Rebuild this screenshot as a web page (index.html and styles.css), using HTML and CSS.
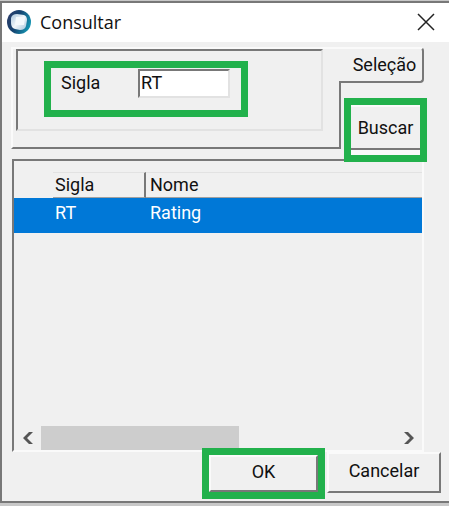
FILE: index.html
```html
<!DOCTYPE html>
<html lang="pt-BR">
<head>
<meta charset="UTF-8">
<meta name="viewport" content="width=device-width, initial-scale=1.0">
<title>Consultar</title>
<link rel="stylesheet" href="styles.css">
</head>
<body>
  <div class="window">
    <header class="title-bar">
      <svg class="logo" width="24" height="24" viewBox="0 0 24 24" aria-hidden="true">
        <defs>
          <linearGradient id="ring" x1="0" y1="0.3" x2="1" y2="0.7">
            <stop offset="0" stop-color="#2b3f6b"/>
            <stop offset="0.4" stop-color="#14426f"/>
            <stop offset="1" stop-color="#169cb8"/>
          </linearGradient>
          <linearGradient id="glow" x1="0" y1="0" x2="1" y2="1">
            <stop offset="0" stop-color="#a9c6dc"/>
            <stop offset="0.5" stop-color="#f1f6fa"/>
            <stop offset="1" stop-color="#a3c3da"/>
          </linearGradient>
        </defs>
        <circle cx="12" cy="12" r="12" fill="url(#ring)"/>
        <path d="M4 8 Q5 4 10 4 L17 5 Q20 6 20 10 L19 16 Q18 20 13 20 L8 19 Q4 18 4 13 Z" fill="url(#glow)"/>
        <path d="M9 7 L18 7 L17 15 L8 15 Z" fill="#f4f9fc"/>
      </svg>
      <h1>Consultar</h1>
      <button class="close-button" aria-label="Fechar">
        <svg width="18" height="18" viewBox="0 0 18 18">
          <path d="M1 1 L17 17 M17 1 L1 17" stroke="#222" stroke-width="1.5" fill="none"/>
        </svg>
      </button>
    </header>

    <main class="content">
      <section class="search">
        <div class="search-panel">
          <div class="search-group">
            <div class="highlight field">
              <label for="sigla">Sigla</label>
              <input type="text" id="sigla" value="RT">
            </div>
          </div>
        </div>
        <div class="search-side">
          <button class="tab">Seleção</button>
          <div class="highlight search-action">
            <button class="button">Buscar</button>
          </div>
        </div>
      </section>

      <section class="results">
        <table>
          <thead>
            <tr>
              <td class="marker"></td>
              <th class="code">Sigla</th>
              <th>Nome</th>
            </tr>
          </thead>
          <tbody>
            <tr class="selected">
              <td></td>
              <td>RT</td>
              <td>Rating</td>
            </tr>
          </tbody>
        </table>
        <div class="scrollbar">
          <button class="arrow" aria-label="Rolar para a esquerda">
            <svg width="12" height="12" viewBox="0 0 12 12"><path d="M7 0 H11 L5 6 L11 12 H7 L1 6 Z" fill="#555"/></svg>
          </button>
          <div class="track"><div class="thumb"></div></div>
          <button class="arrow" aria-label="Rolar para a direita">
            <svg width="12" height="12" viewBox="0 0 12 12"><path d="M5 0 H1 L7 6 L1 12 H5 L11 6 Z" fill="#555"/></svg>
          </button>
        </div>
      </section>

      <footer class="actions">
        <div class="highlight confirm">
          <button class="button">OK</button>
        </div>
        <button class="button cancel">Cancelar</button>
      </footer>
    </main>
  </div>
</body>
</html>
```
FILE: styles.css
```css
* {
  box-sizing: border-box;
  margin: 0;
  padding: 0;
}

body {
  display: flex;
  min-height: 100vh;
  padding: 1px 0 3px;
  background-color: #c8c8c8;
  color: #111;
  font-family: Roboto, "Liberation Sans", sans-serif;
  font-size: 18px;
  line-height: 22px;
}

button,
input {
  font: inherit;
  color: inherit;
}

.window {
  flex: 1;
  display: flex;
  flex-direction: column;
  border: 2px solid #787878;
  border-right: none;
  background-color: #f0f0f0;
}

.title-bar {
  display: flex;
  align-items: center;
  height: 39px;
  padding: 0 14px 2px 5px;
  background-color: #fff;
}

.logo {
  margin-right: 9px;
}

h1 {
  flex: 1;
  font-family: "Open Sans", "Noto Sans", sans-serif;
  font-size: 18px;
  font-weight: normal;
}

.close-button {
  display: flex;
  border: none;
  background: none;
}

.content {
  flex: 1;
  display: flex;
  flex-direction: column;
  padding: 5px 8px 8px 9px;
}

.highlight {
  display: flex;
  position: relative;
  z-index: 1;
  border: 7px solid #22b14c;
  background-color: #f0f0f0;
}

.button {
  flex: 1;
  padding-bottom: 3px;
  border: 2px solid #787878;
  border-top-color: #fafafa;
  border-left-color: #fafafa;
  background-color: #f0f0f0;
}

/* Search area */
.search {
  display: flex;
  margin-right: 17px;
}

.search-panel {
  flex: 1;
  padding: 0 16px 16px 3px;
  border: 2px solid #787878;
  border-top-color: #fafafa;
  border-left-color: #fafafa;
}

.search-group {
  height: 82px;
  padding: 10px 26px;
  border: 2px solid #787878;
  border-right-color: #e2e2e2;
  border-bottom-color: #e2e2e2;
}

.field {
  width: 204px;
  height: 56px;
  padding: 1px 11px 0 10px;
}

.field label {
  width: 77px;
  padding-top: 3px;
}

.field input {
  flex: 1;
  min-width: 0;
  height: 29px;
  padding: 0 1px 2px;
  border: 2px solid #787878;
  border-right-color: #e2e2e2;
  border-bottom-color: #e2e2e2;
  background-color: #fff;
}

.search-side {
  display: flex;
  flex-direction: column;
  width: 85px;
  margin-left: -2px;
}

.tab {
  position: relative;
  height: 36px;
  padding-left: 8px;
  border: 2px solid #787878;
  border-top-color: #fafafa;
  border-left: none;
  border-radius: 0 4px 4px 0;
  background-color: #f0f0f0;
}

.search-action {
  height: 64px;
  margin: 15px -3px -13px 5px;
  padding-bottom: 5px;
  background-color: #fafafa;
}

.search-action .button {
  padding-bottom: 0;
  border-left: none;
  border-right: none;
}

/* Results grid */
.results {
  flex: 1;
  display: flex;
  flex-direction: column;
  margin: 10px 17px 0 1px;
  padding-top: 11px;
  border: 2px solid #787878;
  border-right-color: #fafafa;
  border-bottom-color: #fafafa;
}

table {
  width: 100%;
  table-layout: fixed;
  border-collapse: separate;
  border-spacing: 0;
}

.marker {
  width: 39px;
}

th {
  height: 26px;
  padding: 0 4px;
  border-top: 1px solid #e2e2e2;
  border-bottom: 1px solid #a0a0a0;
  font-weight: normal;
  text-align: left;
}

.code {
  width: 93px;
  padding: 0 2px;
  border-right: 2px solid #787878;
}

.selected {
  background-color: #0078d7;
  color: #fff;
}

.selected td {
  height: 35px;
  padding: 0 4px 6px;
}

.selected td:nth-child(2) {
  padding-left: 2px;
}

.scrollbar {
  display: flex;
  height: 24px;
  margin-top: auto;
}

.arrow {
  display: flex;
  align-items: center;
  justify-content: center;
  width: 27px;
  border: none;
  background: none;
}

.track {
  flex: 1;
}

.thumb {
  width: 56%;
  height: 100%;
  background-color: #cdcdcd;
}

/* Bottom buttons */
.actions {
  display: flex;
  justify-content: flex-end;
  gap: 2px;
}

.confirm {
  width: 123px;
  height: 51px;
  margin: -4px 0 -6px;
}

.cancel {
  flex: none;
  width: 114px;
}
```
